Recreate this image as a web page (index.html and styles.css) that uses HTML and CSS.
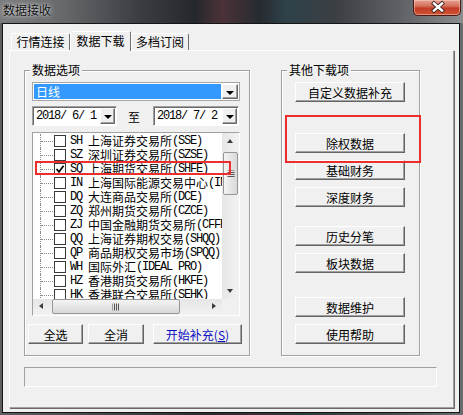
FILE: index.html
```html
<!DOCTYPE html>
<html lang="zh-CN">
    <head>
        <meta charset="UTF-8" />
        <meta name="viewport" content="width=device-width, initial-scale=1" />
        <title>数据接收</title>
        <link rel="stylesheet" href="styles.css">
    </head>
    <body>
        <div class="window">
            <div class="titlebar">
                <span class="title">数据接收</span>
                <div class="close">
                    <svg width="46" height="15" viewBox="0 0 46 15">
                        <path d="M20 3.5 L28 10.5 M28 3.5 L20 10.5" stroke="#3b2420" stroke-width="4.2" stroke-linecap="square" fill="none" />
                        <path d="M20 3.5 L28 10.5 M28 3.5 L20 10.5" stroke="#fff" stroke-width="2.4" stroke-linecap="square" fill="none" />
                    </svg>
                </div>
            </div>

            <div class="client">
                <div class="tabs">
                    <div class="tab tab-1">行情连接</div>
                    <div class="tab tab-2 active">数据下载</div>
                    <div class="tab tab-3">多档订阅</div>
                </div>

                <div class="panel">
                    <div class="groups">
                        <!-- 数据选项 -->
                        <div class="group group-left">
                            <span class="legend">数据选项</span>
                            <div class="combo">
                                <div class="combo-value">日线</div>
                                <div class="drop"></div>
                            </div>
                            <div class="dates">
                                <div class="date date-1">
                                    <span class="date-text">2018/ 6/ 1</span>
                                    <div class="drop"></div>
                                </div>
                                <span class="to">至</span>
                                <div class="date date-2">
                                    <span class="date-text">2018/ 7/ 2</span>
                                    <div class="drop"></div>
                                </div>
                            </div>
                            <div class="list">
                                <div class="tree">
                                    <div class="row"><span class="twig"></span><span class="check"></span><span class="en">SH </span>上海证券交易所<span class="en">(SSE)</span></div>
                                    <div class="row"><span class="twig"></span><span class="check"></span><span class="en">SZ </span>深圳证券交易所<span class="en">(SZSE)</span></div>
                                    <div class="row"><span class="twig"></span><span class="check"><svg width="10" height="10" viewBox="0 0 10 10"><path d="M1.5 5 L4 7.8 L8.6 1.8" fill="none" stroke="#000" stroke-width="1.7" /></svg></span><span class="en">SQ </span>上海期货交易所<span class="en">(SHFE)</span></div>
                                    <div class="row"><span class="twig"></span><span class="check"></span><span class="en">IN </span>上海国际能源交易中心<span class="en">(INE)</span></div>
                                    <div class="row"><span class="twig"></span><span class="check"></span><span class="en">DQ </span>大连商品交易所<span class="en">(DCE)</span></div>
                                    <div class="row"><span class="twig"></span><span class="check"></span><span class="en">ZQ </span>郑州期货交易所<span class="en">(CZCE)</span></div>
                                    <div class="row"><span class="twig"></span><span class="check"></span><span class="en">ZJ </span>中国金融期货交易所<span class="en">(CFFEX)</span></div>
                                    <div class="row"><span class="twig"></span><span class="check"></span><span class="en">QQ </span>上海证券期权交易<span class="en">(SHQQ)</span></div>
                                    <div class="row"><span class="twig"></span><span class="check"></span><span class="en">QP </span>商品期权交易市场<span class="en">(SPQQ)</span></div>
                                    <div class="row"><span class="twig"></span><span class="check"></span><span class="en">WH </span>国际外汇<span class="en">(IDEAL PRO)</span></div>
                                    <div class="row"><span class="twig"></span><span class="check"></span><span class="en">HZ </span>香港期货交易所<span class="en">(HKFE)</span></div>
                                    <div class="row"><span class="twig"></span><span class="check"></span><span class="en">HK </span>香港联合交易所<span class="en">(SEHK)</span></div>
                                </div>
                                <div class="vscroll">
                                    <div class="arrow up"></div>
                                    <div class="thumb thumb-v"></div>
                                    <div class="track"></div>
                                    <div class="arrow down"></div>
                                </div>
                                <div class="hscroll">
                                    <div class="arrow left"></div>
                                    <div class="thumb thumb-h"></div>
                                    <div class="track"></div>
                                    <div class="arrow right"></div>
                                </div>
                                <div class="corner"></div>
                                <!-- 红框标注 -->
                                <div class="mark mark-row"></div>
                            </div>
                            <div class="actions">
                                <button class="btn btn-all">全选</button>
                                <button class="btn btn-none">全消</button>
                                <button class="btn btn-start">开始补充(<u>S</u>)</button>
                            </div>
                        </div>

                        <!-- 其他下载项 -->
                        <div class="group group-right">
                            <span class="legend">其他下载项</span>
                            <div class="stack">
                                <button class="btn">自定义数据补充</button>
                            </div>
                            <div class="stack stack-2">
                                <button class="btn">除权数据</button>
                                <button class="btn">基础财务</button>
                                <button class="btn">深度财务</button>
                            </div>
                            <div class="stack stack-3">
                                <button class="btn">历史分笔</button>
                                <button class="btn">板块数据</button>
                            </div>
                            <div class="stack stack-4">
                                <button class="btn">数据维护</button>
                                <button class="btn">使用帮助</button>
                            </div>
                            <div class="mark mark-btn"></div>
                        </div>
                    </div>
                    <div class="status"></div>
                </div>
            </div>
        </div>
    </body>
</html>
```

FILE: styles.css
```css
/* Reset básico */
* {
    box-sizing: border-box;
    margin: 0;
    padding: 0;
}
body {
    font-family: "Noto Sans CJK SC", sans-serif;
    font-size: 12px;
    color: #000;
    background: #2a2d31;
}
.window {
    width: 463px;
    height: 415px;
    background: linear-gradient(90deg, #5d5f62 0%, #3c3f44 30%, #2a2c31 45%, #3a3036 55%, #2c3a40 65%, #4a4d52 85%, #6a6d70 100%);
}

/* barra de título */
.titlebar {
    height: 23px;
    display: flex;
    justify-content: space-between;
    align-items: flex-start;
    padding-left: 3px;
    background: linear-gradient(90deg, #7a7b7c 0%, #66686b 14%, #3a3d42 30%, #25282d 42%, #4b3238 48%, #272b31 56%, #2f4249 62%, #3a3e43 72%, #5d6064 86%, #8b8d8f 100%);
}
.title {
    line-height: 20px;
    color: #101010;
    text-shadow: 0 0 6px rgba(255, 255, 255, 0.8), 0 0 2px rgba(255, 255, 255, 0.6);
}
.close {
    width: 48px;
    height: 16px;
    margin-right: 2px;
    border: 1px solid #4a1a12;
    border-top: none;
    border-radius: 0 0 5px 5px;
    background: linear-gradient(#e6a293 0%, #d4705c 40%, #c23c25 55%, #cf5434 100%);
    box-shadow: inset 0 0 0 1px rgba(255, 220, 210, 0.45);
}
.close svg {
    display: block;
}

/* área cliente */
.client {
    height: 390px;
    margin: 0 3px 0 2px;
    border: 1px solid #151515;
    background: #f0f0f0;
}
.tabs {
    display: flex;
    align-items: flex-end;
    height: 26px;
    padding-left: 8px;
}
.tab {
    height: 17px;
    line-height: 16px;
    text-align: center;
    border: 1px solid;
    border-bottom: none;
    border-color: #fff #6e6e6e transparent #fff;
    border-radius: 2px 2px 0 0;
    background: #f0f0f0;
}
.tab-1 {
    width: 59px;
}
.tab-2 {
    width: 61px;
}
.tab-3 {
    width: 58px;
}
.tab.active {
    height: 20px;
    line-height: 18px;
    margin-bottom: -1px;
    position: relative;
    z-index: 1;
}
.panel {
    height: 358px;
    margin: 0 5px 0 6px;
    padding: 19px 0 0 14px;
    border: 1px solid;
    border-color: #fff #a0a0a0 #a0a0a0 #fff;
    box-shadow: 1px 1px 0 #696969;
}
.groups {
    display: flex;
    gap: 31px;
}
.group {
    position: relative;
    height: 286px;
    border: 1px solid #a0a0a0;
    box-shadow: inset 1px 1px 0 #fff, 1px 1px 0 #fff;
}
.group-left {
    width: 226px;
    padding: 11px 0 0 7px;
}
.group-right {
    width: 139px;
    padding: 11px 0 0 13px;
}
.legend {
    position: absolute;
    top: -8px;
    left: 5px;
    padding: 0 2px;
    line-height: 14px;
    background: #f0f0f0;
}

/* combo e datas */
.combo {
    display: flex;
    width: 208px;
    height: 19px;
    padding: 1px;
    border: 1px solid #a7a7a7;
    background: #fff;
}
.combo-value {
    flex: 1;
    padding-left: 2px;
    line-height: 15px;
    color: #fff;
    background: #3399ff;
}
.drop {
    position: relative;
    width: 16px;
    margin-left: 1px;
    border: 1px solid;
    border-color: #fff #696969 #696969 #fff;
    box-shadow: inset -1px -1px 0 #a0a0a0;
    background: #f0f0f0;
}
.drop::after {
    content: "";
    position: absolute;
    left: 3px;
    top: 6px;
    border-left: 4px solid transparent;
    border-right: 4px solid transparent;
    border-top: 4px solid #000;
}
.dates {
    display: flex;
    align-items: center;
    height: 20px;
    margin-top: 5px;
}
.date {
    display: flex;
    height: 20px;
    padding: 1px 1px 1px 2px;
    border: 1px solid;
    border-color: #a0a0a0 #fff #fff #a0a0a0;
    box-shadow: inset 1px 1px 0 #696969;
    background: #fff;
}
.date-1 {
    width: 85px;
}
.date-2 {
    width: 86px;
}
.date-text {
    flex: 1;
    padding: 1px 0 0 1px;
    white-space: pre;
    font-family: "Liberation Mono", monospace;
    font-size: 12px;
    letter-spacing: -1.2px;
    line-height: 15px;
}
.date .drop {
    flex: none;
    width: 15px;
}
.to {
    margin: 0 13px 0 11px;
}

/* lista em árvore */
.list {
    position: relative;
    display: grid;
    grid-template-columns: 1fr 17px;
    grid-template-rows: 1fr 16px;
    width: 208px;
    height: 184px;
    margin-top: 6px;
    border: 1px solid;
    border-color: #a0a0a0 #fff #fff #a0a0a0;
    background: #fff;
}
.tree {
    overflow: hidden;
    padding: 1px 0 0 7px;
}
.row {
    display: flex;
    align-items: center;
    height: 14px;
    white-space: pre;
    line-height: 14px;
}
.twig {
    position: relative;
    flex: none;
    width: 14px;
    height: 14px;
    border-left: 1px dotted #8a8a8a;
}
.twig::after {
    content: "";
    position: absolute;
    left: 0;
    top: 7px;
    width: 12px;
    border-top: 1px dotted #8a8a8a;
}
.check {
    flex: none;
    width: 12px;
    height: 12px;
    margin-right: 4px;
    border: 1px solid #3a3a3a;
    background: #fff;
}
.check svg {
    display: block;
}
.en {
    font-family: "Liberation Mono", monospace;
    font-size: 12px;
    letter-spacing: -1.2px;
}

/* barras de rolagem */
.vscroll,
.hscroll {
    display: flex;
    background: linear-gradient(90deg, #e6e6e6, #f2f2f2);
}
.vscroll {
    flex-direction: column;
}
.hscroll {
    background: linear-gradient(#e6e6e6, #f2f2f2);
}
.track {
    flex: 1;
}
.arrow {
    position: relative;
    flex: none;
    width: 17px;
    height: 17px;
}
.hscroll .arrow {
    height: 16px;
}
.arrow::after {
    content: "";
    position: absolute;
}
.up::after {
    left: 5px;
    top: 6px;
    border-left: 3.5px solid transparent;
    border-right: 3.5px solid transparent;
    border-bottom: 4px solid #3c3c3c;
}
.down::after {
    left: 5px;
    top: 7px;
    border-left: 3.5px solid transparent;
    border-right: 3.5px solid transparent;
    border-top: 4px solid #3c3c3c;
}
.left::after {
    left: 6px;
    top: 4px;
    border-top: 3.5px solid transparent;
    border-bottom: 3.5px solid transparent;
    border-right: 4px solid #3c3c3c;
}
.right::after {
    left: 7px;
    top: 4px;
    border-top: 3.5px solid transparent;
    border-bottom: 3.5px solid transparent;
    border-left: 4px solid #3c3c3c;
}
.thumb {
    position: relative;
    flex: none;
    border: 1px solid #979797;
    border-radius: 2px;
}
.thumb::after {
    content: "";
    position: absolute;
    left: 50%;
    top: 50%;
    transform: translate(-50%, -50%);
}
.thumb-v {
    height: 43px;
    margin: 2px 1px 0;
    background: linear-gradient(90deg, #f4f4f4, #e6e6e6 50%, #d8d8d8);
}
.thumb-v::after {
    width: 7px;
    height: 7px;
    background: repeating-linear-gradient(#555 0 1px, transparent 1px 2px);
}
.thumb-h {
    width: 128px;
    margin: 0 0 1px 2px;
    background: linear-gradient(#f4f4f4, #e6e6e6 50%, #d8d8d8);
}
.thumb-h::after {
    width: 7px;
    height: 7px;
    background: repeating-linear-gradient(90deg, #555 0 1px, transparent 1px 2px);
}
.corner {
    background: #f0f0f0;
}

/* marcações em vermelho */
.mark {
    position: absolute;
    border: 2px solid #ee2d2d;
    pointer-events: none;
}
.mark-row {
    left: 2px;
    top: 28px;
    width: 196px;
    height: 14px;
}
.mark-btn {
    left: 3px;
    top: 44px;
    width: 136px;
    height: 48px;
}

/* botões */
.btn {
    height: 20px;
    border: 1px solid;
    border-color: #fff #646464 #646464 #fff;
    box-shadow: inset -1px -1px 0 #a0a0a0;
    background: #f0f0f0;
    font-family: "Noto Sans CJK SC", sans-serif;
    font-size: 12px;
    line-height: 17px;
    color: #000;
}
.actions {
    display: flex;
    gap: 5px;
    margin: 8px 0 0 -4px;
}
.btn-all {
    width: 55px;
}
.btn-none {
    width: 56px;
}
.btn-start {
    width: 89px;
    margin-left: 4px;
    color: #0a0ac0;
}
.stack {
    display: flex;
    flex-direction: column;
    gap: 7px;
}
.stack .btn {
    width: 110px;
}
.stack-2 {
    margin-top: 31px;
}
.stack-3 {
    margin-top: 19px;
}
.stack-4 {
    margin-top: 24px;
}
.status {
    width: 413px;
    height: 20px;
    margin-top: 11px;
    border: 1px solid;
    border-color: #a0a0a0 #fff #fff #a0a0a0;
}
```
